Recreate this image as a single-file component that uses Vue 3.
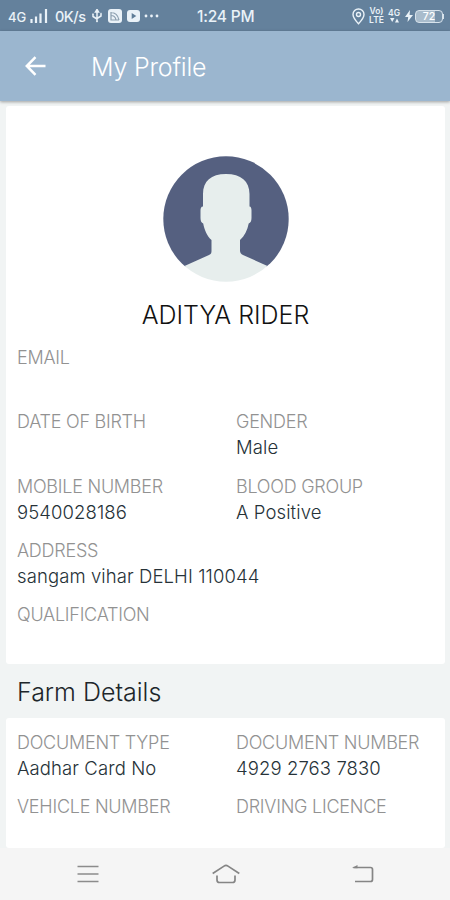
<template>
  <div class="screen">
    <div class="status">
      <span class="status__net">4G</span>
      <svg class="status__signal" width="18" height="14" viewBox="0 0 18 14">
        <path d="M1.5 10v4M6 7.5V14M10.5 4.5V14M16 0v14" stroke="#eaf2f8" stroke-width="2.2" />
      </svg>
      <span class="status__speed">0K/s</span>
      <svg class="status__usb" width="12" height="14" viewBox="0 0 12 14" fill="none" stroke="#eaf2f8" stroke-width="1.5">
        <path d="M6 2v11M2 5v2.500l4 2.500M10 4.500V7L6 9.500" />
        <path d="M6 .5l1.500 2.500h-3zM5.500 12.500h1M1.500 5h1M9.500 4.500h1" fill="#eaf2f8" />
      </svg>
      <svg class="status__app" width="14" height="14" viewBox="0 0 14 14">
        <rect width="14" height="14" rx="3" fill="#eaf2f8" />
        <path d="M3 3.5c4 0 7 3 8 7.500M3 6.500c3 0 4.500 1.500 5 4.500M3 3v8h8" fill="none" stroke="#8b9fb0" stroke-width="1.200" />
      </svg>
      <svg class="status__play" width="13" height="12" viewBox="0 0 13 12">
        <rect width="13" height="12" rx="3" fill="#eaf2f8" />
        <path d="M4.700 3l4.600 3-4.600 3z" fill="#5f7d98" />
      </svg>
      <svg class="status__more" width="15" height="4" viewBox="0 0 15 4" fill="#eaf2f8">
        <circle cx="2" cy="2" r="1.400" /><circle cx="7.500" cy="2" r="1.400" /><circle cx="13" cy="2" r="1.400" />
      </svg>
      <span class="status__time">1:24 PM</span>
      <svg class="status__pin" width="13" height="17" viewBox="0 0 13 17" fill="none" stroke="#eaf2f8" stroke-width="1.400">
        <path d="M6.500 15.800C3 12 1 9.500 1 6.500a5.500 5.500 0 0 1 11 0c0 3-2 5.500-5.500 9.300z" />
        <circle cx="6.500" cy="6.500" r="2" />
      </svg>
      <span class="status__volte"><span>Vo)</span><span>LTE</span></span>
      <span class="status__data">
        <span>4G</span>
        <svg width="9" height="5" viewBox="0 0 9 5" fill="#eaf2f8"><path d="M0 0h4.500L2.200 4zM5 4.500h4L7 .5z" /></svg>
      </span>
      <svg class="status__bolt" width="8" height="12" viewBox="0 0 8 12"><path d="M5 0L0 7h3.200L2.500 12 8 5H4.600z" fill="#eaf2f8" /></svg>
      <span class="status__battery">72</span>
      <i class="status__cap"></i>
    </div>

    <header class="bar">
      <svg class="bar__back" width="22" height="20" viewBox="0 0 22 20" fill="none" stroke="#fff" stroke-width="2.500">
        <path d="M20.500 10H2M10.500 1.200L1.800 10l8.700 8.800" />
      </svg>
      <h1 class="bar__title">My Profile</h1>
    </header>

    <main class="content">
      <section class="card card--profile">
        <svg class="avatar" width="126" height="126" viewBox="0 0 126 126">
          <defs>
            <clipPath id="avatar-clip"><circle cx="63" cy="63" r="62.700" /></clipPath>
          </defs>
          <g clip-path="url(#avatar-clip)">
            <rect width="126" height="110.500" fill="#556080" />
            <path
              fill="#e7eeed"
              d="M63 18C48 18 40 25 40 38v12.500c-2 0-2.500 2-2.500 4V62c0 3 1 5 2.700 5.500C41.500 74 44 80 48.500 84v11c0 2-.5 3-2.500 4L21.500 110 10 126h106l-11.500-16-24.500-11c-2-1-3-2.500-3-4.500V84c4.500-4 7.500-10 8.700-16.500 1.800-.5 2.800-2.500 2.800-5.500v-7.500c0-2-.5-4-2-4V38c0-13-8.500-20-23.500-20z"
            />
          </g>
        </svg>
        <h2 class="name">ADITYA RIDER</h2>
        <div class="fields">
          <div v-for="field in profile" :key="field.label" class="field" :class="{ 'field--wide': field.wide }">
            <span class="field__label">{{ field.label }}</span>
            <span class="field__value">{{ field.value }}</span>
          </div>
        </div>
      </section>

      <h2 class="section">Farm Details</h2>

      <section class="card card--farm">
        <div class="fields">
          <div v-for="field in farm" :key="field.label" class="field">
            <span class="field__label">{{ field.label }}</span>
            <span class="field__value">{{ field.value }}</span>
          </div>
        </div>
      </section>
    </main>

    <nav class="nav">
      <svg width="22" height="18" viewBox="0 0 22 18" stroke="#8c8c8c" stroke-width="1.700">
        <path d="M.5 1.500h21M.5 9h21M.5 16.500h21" />
      </svg>
      <svg width="28" height="20" viewBox="0 0 28 20" fill="none" stroke="#858585" stroke-width="1.700">
        <path d="M.7 9.500L12 2.100q2-1.300 4 0L27.300 9.500M5 11.500V16q0 2.500 2.500 2.500h13Q23 18.500 23 16v-4.500" />
      </svg>
      <svg width="22" height="18" viewBox="0 0 22 18" fill="none" stroke="#858585" stroke-width="1.700">
        <path d="M1.500 2.500h17q2 0 2 2v10q0 2-2 2H3" />
        <path d="M0 3L5.500 0v3.300z" fill="#858585" stroke="none" />
      </svg>
    </nav>
  </div>
</template>

<script setup>
const profile = [
  { label: 'EMAIL', value: '', wide: true },
  { label: 'DATE OF BIRTH', value: '' },
  { label: 'GENDER', value: 'Male' },
  { label: 'MOBILE NUMBER', value: '9540028186' },
  { label: 'BLOOD GROUP', value: 'A Positive' },
  { label: 'ADDRESS', value: 'sangam vihar DELHI 110044', wide: true },
  { label: 'QUALIFICATION', value: '', wide: true },
]

const farm = [
  { label: 'DOCUMENT TYPE', value: 'Aadhar Card No' },
  { label: 'DOCUMENT NUMBER', value: '4929 2763 7830' },
  { label: 'VEHICLE NUMBER', value: '' },
  { label: 'DRIVING LICENCE', value: '' },
]
</script>

<style>
body {
  margin: 0;
}
</style>

<style scoped>
.screen {
  display: flex;
  flex-direction: column;
  width: 450px;
  height: 900px;
  overflow: hidden;
  background: #f1f4f4;
  font-family: Inter, 'Liberation Sans', sans-serif;
  font-weight: 300;
}

.status {
  display: flex;
  flex: none;
  align-items: center;
  box-sizing: border-box;
  height: 31px;
  padding: 1px 6px 0 8px;
  background: #64819c;
  color: #eaf2f8;
  font-size: 13px;
  font-weight: 500;
  white-space: nowrap;
}

.status svg {
  flex: none;
}

.status__net {
  width: 22px;
  padding-top: 2px;
}

.status__speed {
  width: 31px;
  margin-left: 7px;
  font-size: 14.5px;
  letter-spacing: -0.5px;
}

.status__usb {
  margin-left: 5px;
}

.status__app {
  margin-left: 5px;
}

.status__play {
  margin-left: 5px;
}

.status__more {
  margin-left: 4px;
}

.status__time {
  width: 60px;
  margin-left: 38px;
  font-size: 15.5px;
  letter-spacing: -0.2px;
}

.status__pin {
  margin-left: auto;
}

.status__volte,
.status__data {
  display: flex;
  flex-direction: column;
  align-items: center;
  width: 17px;
  margin-left: 3px;
  font-size: 8.5px;
  font-weight: 600;
  line-height: 9px;
}

.status__data {
  width: 12px;
}

.status__bolt {
  margin-left: 5px;
}

.status__battery {
  box-sizing: border-box;
  width: 28px;
  height: 13px;
  margin-left: 2px;
  border: 1px solid #d7e2eb;
  border-radius: 4px;
  background: linear-gradient(90deg, #a9bccc 74%, #7590a8 74%);
  color: #fff;
  font-size: 10.5px;
  line-height: 11px;
  text-align: center;
}

.status__cap {
  width: 1px;
  height: 5px;
  background: #d7e2eb;
}

.bar {
  position: relative;
  z-index: 1;
  display: flex;
  flex: none;
  align-items: center;
  box-sizing: border-box;
  height: 70px;
  padding-left: 25px;
  background: #9bb6cf;
  box-shadow: 0 1px 3px rgba(0, 0, 0, 0.35);
}

.bar__title {
  margin: 0 0 0 44px;
  padding-top: 1px;
  color: #fff;
  font-size: 25px;
  font-weight: 300;
  letter-spacing: -0.2px;
}

.content {
  flex: 1;
  padding: 5px 5px 0 6px;
}

.card {
  box-sizing: border-box;
  border-radius: 3px;
  background: #fff;
}

.card--profile {
  height: 557.500px;
  padding-top: 50px;
}

.avatar {
  display: block;
  margin: 0 auto;
}

.name {
  height: 34px;
  margin: 16px 0 13px;
  color: #111;
  font-size: 25px;
  font-weight: 300;
  line-height: 34px;
  text-align: center;
}

.fields {
  display: grid;
  grid-template-columns: 219px 1fr;
  padding-left: 11px;
}

.field {
  display: flex;
  flex-direction: column;
  height: 64.300px;
  white-space: nowrap;
}

.field--wide {
  grid-column: 1 / 3;
}

.field__label {
  height: 25px;
  color: #929292;
  font-size: 18px;
  letter-spacing: -0.25px;
  line-height: 26px;
}

.field__value {
  height: 26px;
  color: #263238;
  font-size: 18.500px;
  letter-spacing: 0.1px;
  line-height: 26px;
}

.section {
  height: 54px;
  margin: 0 0 0 11px;
  color: #20262a;
  font-size: 25px;
  font-weight: 300;
  line-height: 57px;
}

.card--farm {
  height: 130.500px;
  padding-top: 12px;
}

.nav {
  display: flex;
  flex: none;
  align-items: center;
  justify-content: space-between;
  box-sizing: border-box;
  height: 52px;
  padding: 0 76px 0 77px;
  background: #f5f5f5;
}
</style>
